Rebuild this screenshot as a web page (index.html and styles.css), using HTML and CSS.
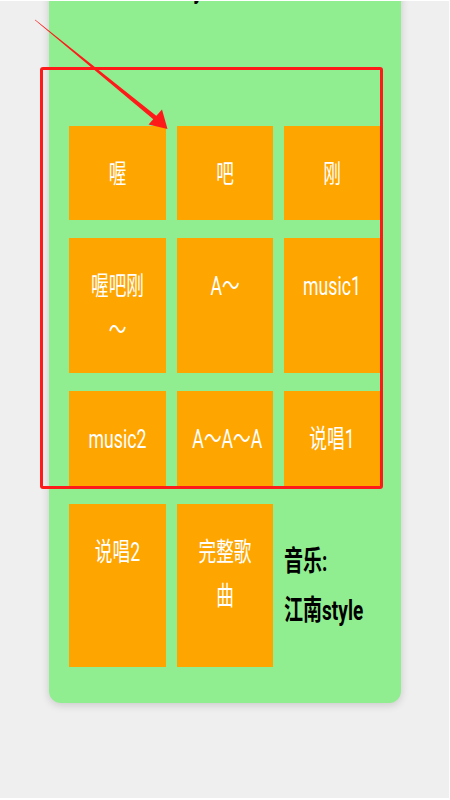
FILE: index.html
```html
<!DOCTYPE html>
<html lang="zh">
<head>
<meta charset="utf-8">
<title>音乐</title>
<link rel="stylesheet" href="styles.css">
</head>
<body>
<div class="screen">
  <div class="card">
    <div class="head"><span class="sq-left">江南style 音乐</span></div>
    <div class="grid">
      <div class="tile"><span class="sq">喔</span></div>
      <div class="tile"><span class="sq">吧</span></div>
      <div class="tile"><span class="sq">刚</span></div>
      <div class="tile"><span class="sq">喔吧刚<br>～</span></div>
      <div class="tile"><span class="sq">A～</span></div>
      <div class="tile"><span class="sq">music1</span></div>
      <div class="tile"><span class="sq">music2</span></div>
      <div class="tile"><span class="sq">A～A～A</span></div>
      <div class="tile"><span class="sq">说唱1</span></div>
      <div class="tile"><span class="sq">说唱2</span></div>
      <div class="tile"><span class="sq">完整歌<br>曲</span></div>
      <div class="info"><span class="sq-left">音乐:<br>江南style</span></div>
    </div>
  </div>
  <div class="mark-box"></div>
  <svg class="arrow" width="450" height="800" viewBox="0 0 450 800">
    <polygon points="35,19.6 35.4,20.4 159.5,124.5 162.5,120.8" fill="#ff1a1a"/>
    <polygon points="167.5,129 162,109.5 148.5,124.5" fill="#ff1a1a"/>
  </svg>
</div>
</body>
</html>
```
FILE: styles.css
```css
html {
  background: #ffffff;
}
body {
  margin: 0;
  background: #ffffff;
}
.screen {
  position: relative;
  margin: 1px 1px 2px 0;
  height: 797px;
  background: #efefef;
  overflow: hidden;
}
.card {
  width: 352px;
  margin: -32px 0 0 49px;
  padding: 0 0 36px 0;
  background: #90ee90;
  border-radius: 0 0 12px 12px;
  box-shadow: 0 2px 8px rgba(0, 0, 0, 0.16);
}
.head {
  height: 40px;
  line-height: 40px;
  padding-left: 90px;
  font-family: Roboto, "Noto Sans CJK SC", sans-serif;
  font-size: 28px;
  font-weight: bold;
  color: #000;
  white-space: nowrap;
}
.grid {
  margin-top: 117px;
  padding-left: 20px;
  display: grid;
  grid-template-columns: 97px 96px 96px;
  grid-template-rows: 94px 135px 95px 163px;
  column-gap: 11px;
  row-gap: 18px;
}
.tile {
  background: #ffa500;
  color: #ffffff;
  font-family: Roboto, "Noto Sans CJK SC", sans-serif;
  font-size: 26px;
  line-height: 44px;
  padding-top: 26px;
  text-align: center;
  white-space: nowrap;
  box-sizing: border-box;
}
.sq {
  display: block;
  transform: scaleX(0.68);
  transform-origin: center;
}
.info {
  display: flex;
  align-items: center;
  font-family: Roboto, "Noto Sans CJK SC", sans-serif;
  font-size: 28px;
  font-weight: bold;
  line-height: 49px;
  color: #000;
  white-space: nowrap;
}
.sq-left {
  display: inline-block;
  transform: scaleX(0.68);
  transform-origin: left center;
}
.mark-box {
  position: absolute;
  left: 40px;
  top: 66px;
  width: 337px;
  height: 416px;
  border: 3px solid #ff1a1a;
  border-radius: 3px;
}
.arrow {
  position: absolute;
  left: 0;
  top: -1px;
}
```
